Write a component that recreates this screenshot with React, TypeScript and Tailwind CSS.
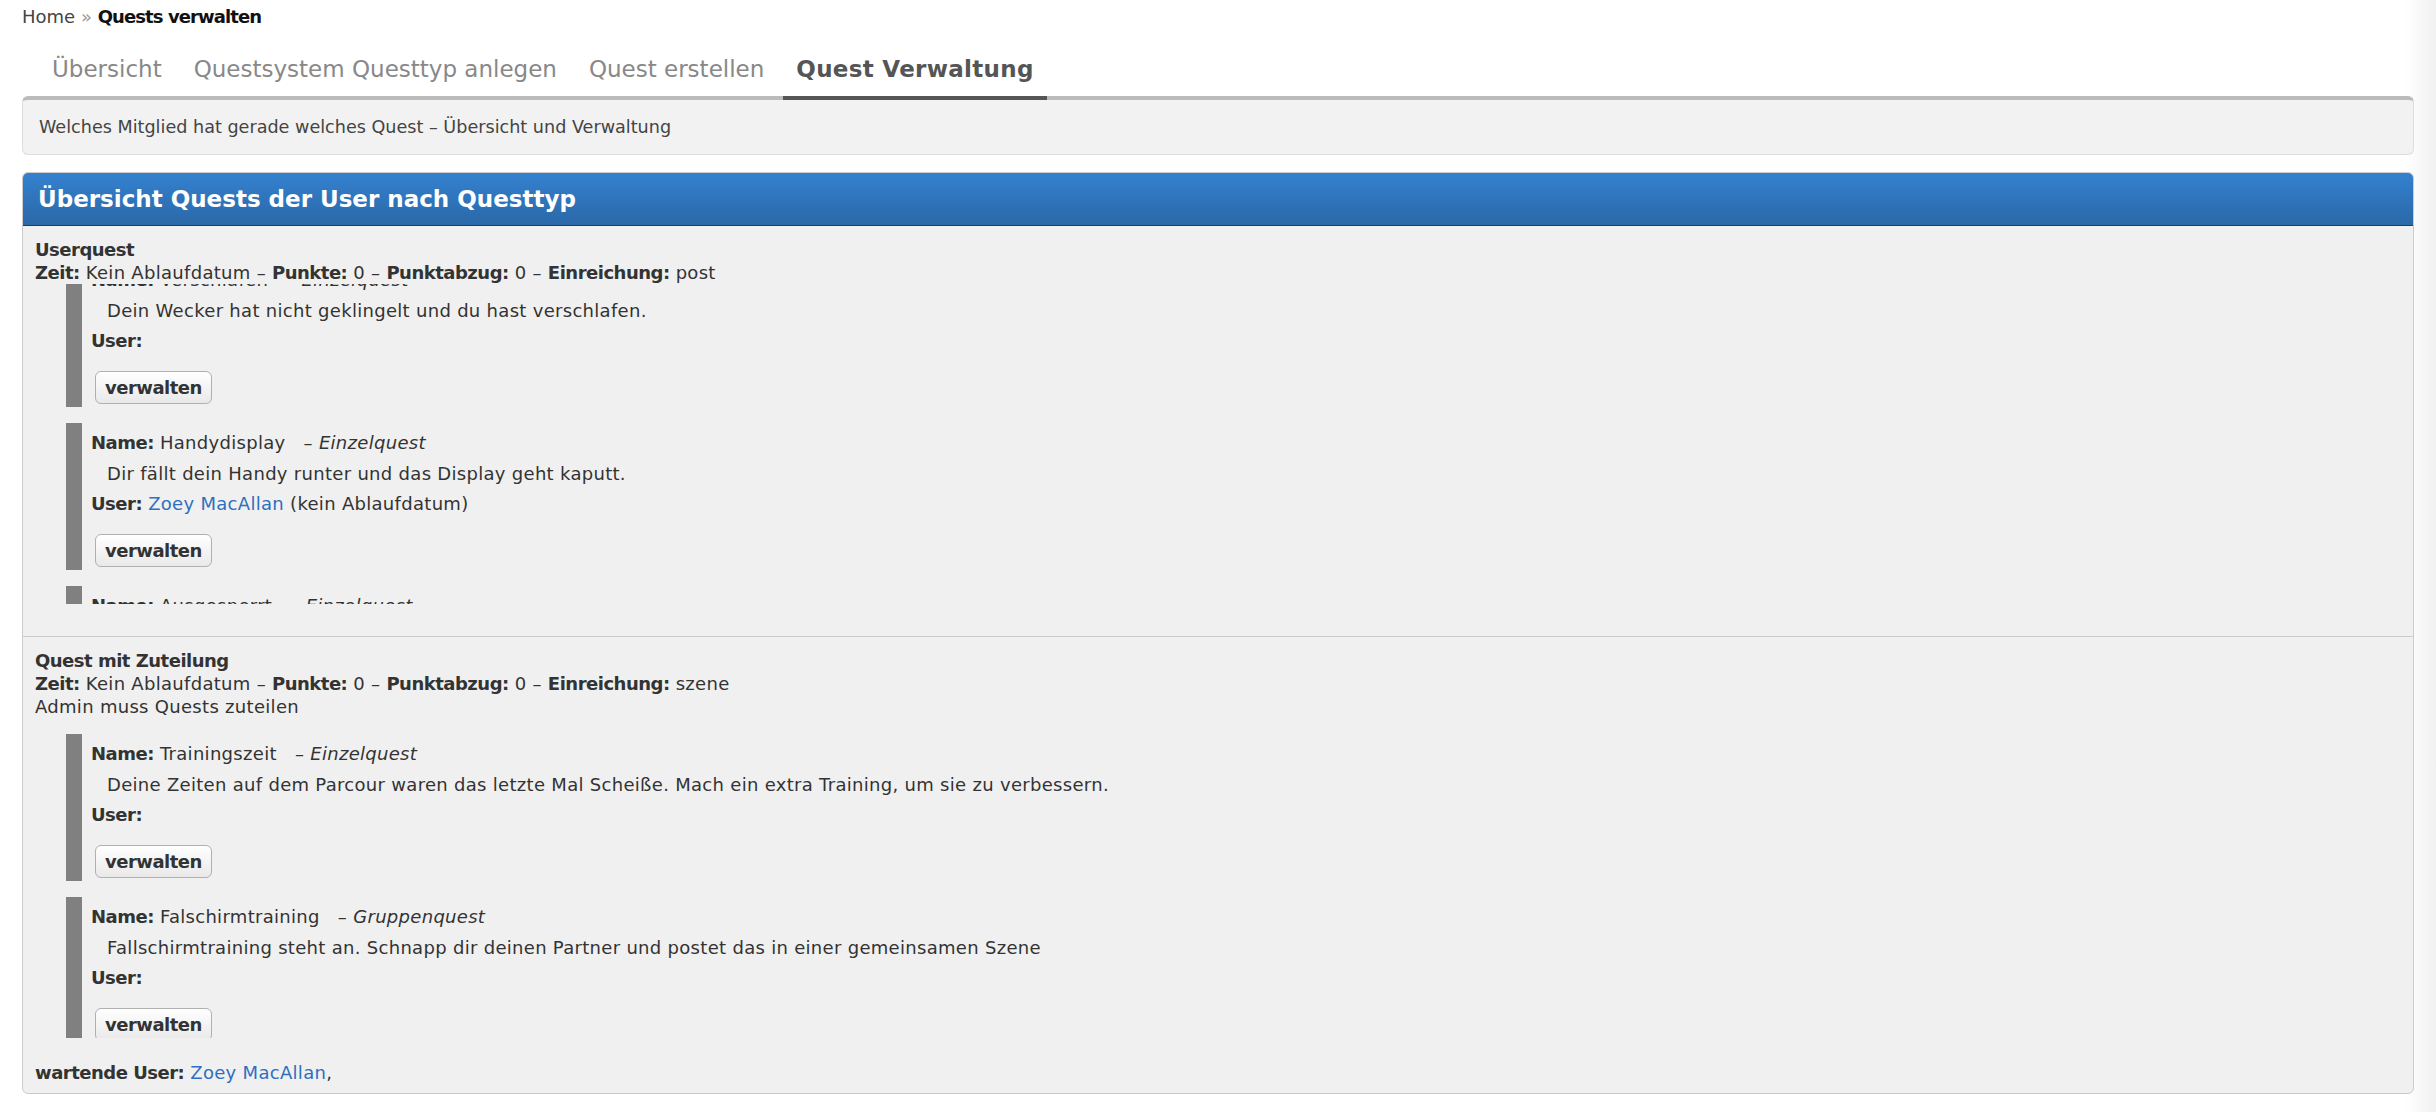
import React, { useEffect, useRef } from "react";

type Quest = {
  name: string;
  kind: string;
  text: string;
  user?: string;
  userNote?: string;
};

type Section = {
  title: string;
  submit: string;
  note?: string;
  quests: Quest[];
  scroll: number;
  waiting?: string;
};

const sections: Section[] = [
  {
    title: "Userquest",
    submit: "post",
    scroll: 40,
    quests: [
      { name: "Verschlafen", kind: "Einzelquest", text: "Dein Wecker hat nicht geklingelt und du hast verschlafen." },
      {
        name: "Handydisplay",
        kind: "Einzelquest",
        text: "Dir fällt dein Handy runter und das Display geht kaputt.",
        user: "Zoey MacAllan",
        userNote: "(kein Ablaufdatum)",
      },
      { name: "Ausgesperrt", kind: "Einzelquest", text: "Du hast deinen Schlüssel vergessen und stehst vor verschlossener Tür." },
    ],
  },
  {
    title: "Quest mit Zuteilung",
    submit: "szene",
    note: "Admin muss Quests zuteilen",
    scroll: 0,
    waiting: "Zoey MacAllan",
    quests: [
      {
        name: "Trainingszeit",
        kind: "Einzelquest",
        text: "Deine Zeiten auf dem Parcour waren das letzte Mal Scheiße. Mach ein extra Training, um sie zu verbessern.",
      },
      {
        name: "Falschirmtraining",
        kind: "Gruppenquest",
        text: "Fallschirmtraining steht an. Schnapp dir deinen Partner und postet das in einer gemeinsamen Szene",
      },
    ],
  },
];

const tabs = ["Übersicht", "Questsystem Questtyp anlegen", "Quest erstellen", "Quest Verwaltung"];

// bold labels run a little wide in DejaVu, pull them in
const B = ({ children }: { children: React.ReactNode }) => (
  <b className="tracking-[-0.5px]">{children}</b>
);

const QuestItem = ({ quest }: { quest: Quest }) => (
  <div className="mt-[16px] ml-[31px] border-l-[16px] border-[#808080] pl-[9px] pt-[8px] pb-[3px]">
    <div>
      <B>Name:</B> {quest.name}
      {"\u00a0\u00a0\u00a0"}– <i>{quest.kind}</i>
    </div>
    <div className="mt-[8px] pl-[16px]">{quest.text}</div>
    <div className="mt-[7px]">
      <B>User:</B>{" "}
      {quest.user && (
        <>
          <a className="text-[#2d6fc0]">{quest.user}</a> {quest.userNote}
        </>
      )}
    </div>
    <button className="mt-[19px] ml-[4px] h-[33px] rounded-[6px] border border-[#b0b0b0] bg-[linear-gradient(#ffffff,#e9e9e9)] px-[9px] font-bold tracking-[-0.5px] text-[#333]">
      verwalten
    </button>
  </div>
);

const QuestSection = ({ section, first }: { section: Section; first: boolean }) => {
  const scrollRef = useRef<HTMLDivElement>(null);

  useEffect(() => {
    if (scrollRef.current) scrollRef.current.scrollTop = section.scroll;
  }, [section.scroll]);

  return (
    <div className={`px-[12px] pt-[12px] pb-[9px] ${first ? "" : "border-t border-[#cccccc]"}`}>
      <div>
        <B>{section.title}</B>
      </div>
      <div>
        <B>Zeit:</B> Kein Ablaufdatum – <B>Punkte:</B> 0 – <B>Punktabzug:</B> 0 – <B>Einreichung:</B> {section.submit}
      </div>
      {section.note && <div>{section.note}</div>}
      <div ref={scrollRef} className="h-[320px] overflow-y-auto [scrollbar-width:none]">
        {section.quests.map((q) => (
          <QuestItem key={q.name} quest={q} />
        ))}
      </div>
      <div className="h-[23px]" />
      {section.waiting && (
        <div>
          <B>wartende User:</B> <a className="text-[#2d6fc0]">{section.waiting}</a>,
        </div>
      )}
    </div>
  );
};

export default function App() {
  return (
    <div
      className="min-h-screen bg-[linear-gradient(to_right,#ffffff_2405px,#f1f1f1_2436px)] px-[22px] text-[18px] leading-[23px] tracking-[0.3px] text-[#333]"
      style={{ fontFamily: '"DejaVu Sans", "Open Sans", sans-serif' }}
    >
      <div className="pt-[5px] tracking-normal text-[#444]">
        Home <span className="text-[#999]">»</span>{" "}
        <b className="tracking-[-0.9px] text-[#111]">Quests verwalten</b>
      </div>

      <div className="relative z-10 mt-[26px] -mb-[4px] flex pl-[14px] text-[23px] leading-[30px] tracking-normal">
        {tabs.map((t, i) => {
          const active = i === tabs.length - 1;
          return (
            <div
              key={t}
              className={`mx-[3px] border-b-4 px-[13px] pb-[12px] ${
                active ? "border-[#555] font-bold tracking-[0.3px] text-[#555]" : "border-transparent text-[#888]"
              }`}
            >
              {t}
            </div>
          );
        })}
      </div>

      <div className="rounded-[6px] border border-t-4 border-[#dddddd] border-t-[#bbbbbb] bg-[#f2f2f2] px-[16px] pt-[16px] pb-[15px] text-[17.6px] tracking-normal text-[#444]">
        Welches Mitglied hat gerade welches Quest – Übersicht und Verwaltung
      </div>

      <div className="mt-[17px] overflow-hidden rounded-[6px] border border-[#cccccc] bg-[#f0f0f0]">
        <div className="h-[53px] border-b border-[#2b3d3d] bg-[linear-gradient(#3481cf,#2b68a8)] pl-[15px] pt-[11px] text-[23px] leading-[30px] font-bold tracking-normal text-white">
          Übersicht Quests der User nach Questtyp
        </div>
        {sections.map((s, i) => (
          <QuestSection key={s.title} section={s} first={i === 0} />
        ))}
      </div>
    </div>
  );
}
